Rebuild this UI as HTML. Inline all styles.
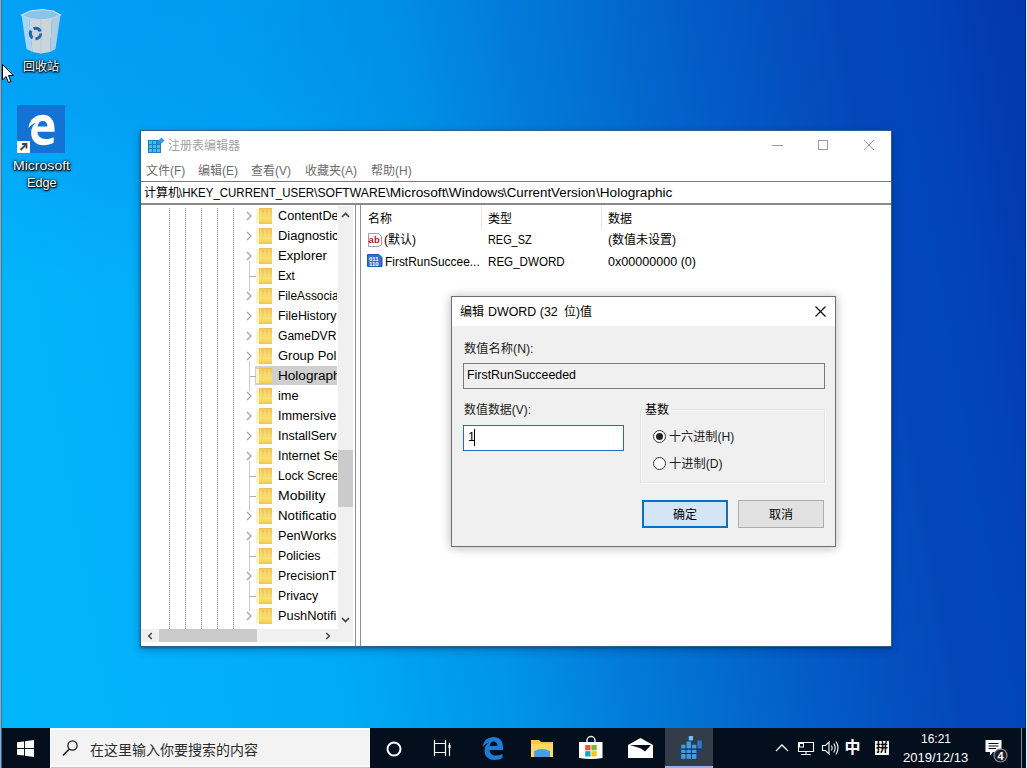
<!DOCTYPE html>
<html lang="zh-CN">
<head>
<meta charset="utf-8">
<title>注册表编辑器</title>
<style>
html,body{margin:0;padding:0}
body{width:1027px;height:768px;overflow:hidden;position:relative;background:#0a6fd6;
  font-family:"Liberation Sans","Noto Sans CJK SC",sans-serif;font-size:12px;color:#000;line-height:1}
div,span{box-sizing:border-box}
.abs,.abs>*{position:absolute}
#wall{left:0;top:0;width:1027px;height:728px;
  background:
    radial-gradient(ellipse 520px 300px at 120px -10px,rgba(0,120,235,.34) 0%,rgba(0,120,235,.26) 40%,rgba(0,120,235,0) 100%),
    linear-gradient(80deg,#02b6fb 0%,#02b4fa 9%,#05b0fa 15%,#00aaf5 31%,#0094e6 45%,#037ada 55%,#0276d4 58%,#035ac8 71.5%,#0446bb 84%,#0246bc 88%,#033ab2 97%,#0337af 100%);}
#edgeL{left:0;top:0;width:2px;height:768px;background:linear-gradient(90deg,#90acbe 0,#90acbe 1px,rgba(70,95,115,.6) 1px,rgba(70,95,115,.6) 2px)}
#edgeR{left:1025px;top:0;width:2px;height:768px;background:linear-gradient(90deg,rgba(0,0,40,.3) 0,rgba(0,0,40,.3) 1px,#e4f3fb 1px,#e4f3fb 2px)}

/* ---------- desktop icons ---------- */
.dlabel{color:#fff;font-size:12px;text-align:center;white-space:nowrap;
  text-shadow:0 1px 2px rgba(0,0,0,.95),0 0 3px rgba(0,0,0,.9),1px 1px 1px rgba(0,0,0,.8),0 0 1px rgba(0,0,0,.8)}

/* ---------- regedit window ---------- */
#win{left:140px;top:130px;width:752px;height:517px;background:#fff;border:1px solid #2c628f;overflow:hidden;
  box-shadow:0 1px 2px rgba(0,20,70,.35),0 3px 8px rgba(0,20,70,.3)}
#wc{left:-1px;top:0;width:752px;height:516px}
#win .title{left:28px;top:7px;font-size:12px;color:#a2a2a2;white-space:nowrap;line-height:16px}
#win .menu{top:32px;font-size:12px;color:#6c6c6c;white-space:nowrap;line-height:16px}
#win .hr1{left:0;top:50px;width:752px;height:1px;background:#7a7a7a}
#win .addr{left:4px;top:54px;font-size:12px;white-space:nowrap;line-height:16px;color:#000}
#win .addr span{position:absolute;top:0;font-size:12.4px}
#win .addr #a1,#win .addr #a2{font-size:12px}
#win .addr #a0{font-size:12px;left:0}
#win .hr2{left:0;top:72px;width:752px;height:2px;background:#8a8a8a}

/* ---------- taskbar ---------- */
#task{left:2px;top:728px;width:1024px;height:40px;background:#040f1e}
#search{left:48px;top:0;width:320px;height:40px;background:#f3f3f3;box-shadow:inset 0 2px 0 #fdfdfd,inset 1px 0 0 #fafafa,inset 0 -1px 0 #c4c4c4,inset 0 -3px 0 #f9f9f9}

/* tree */
#tree{left:1px;top:75px;width:196px;height:423px;overflow:hidden;background:#fff}
#tree .vl{top:2px;width:1px;height:421px;background:repeating-linear-gradient(180deg,#9c9c9c 0,#9c9c9c 1px,#cfcfcf 1px,#cfcfcf 2px)}
#tree .row{left:0;width:197px;height:20px}
#tree .row .chev{left:104px;top:5px;width:8px;height:10px}
#tree .row .dot{left:109px;top:10px;width:7px;height:1px;background:#b0b0b0}
#tree .row .vdot{left:108px;top:-5px;width:1px;height:30px;background:#c9c9c9}
#tree .row .fold{left:115px;top:2px;width:16px;height:16px}
#tree .row .lbl{left:137px;top:2px;font-size:12.5px;line-height:16px;white-space:nowrap;color:#000}
#tree .sel .bg{left:114px;top:0;width:90px;height:19px;background:#cfcfcf}
.fold i{position:absolute;display:block}
.fold .h{left:0;top:1px;width:3px;height:14px;background:#fdf4c4}
.fold .b{left:3px;top:0;width:13px;height:16px;background:linear-gradient(180deg,#eec24c 0%,#f3cd58 30%,#f9e070 62%,#f6d65e 82%,#eec44c 100%)}
.fold .s{left:4px;top:1px;width:11px;height:7px;background:repeating-linear-gradient(90deg,rgba(255,255,255,.16) 0,rgba(255,255,255,.16) 2px,rgba(255,255,255,0) 2px,rgba(255,255,255,0) 4px)}
/* scrollbars */
#vsb{left:198px;top:75px;width:15px;height:423px;background:#f0f0f0}
#vsb .th{left:0;top:244px;width:15px;height:57px;background:#cbcbcb}
#hsb{left:1px;top:498px;width:197px;height:13px;background:#f0f0f0}
#hsb .th{left:18px;top:0;width:98px;height:13px;background:#cbcbcb}
#corner{left:198px;top:498px;width:15px;height:13px;background:#f0f0f0}
#split1{left:215px;top:74px;width:1px;height:442px;background:#8f8f8f}
#split2{left:220px;top:74px;width:1px;height:442px;background:#8f8f8f}
/* list */
#list{left:221px;top:75px;width:531px;height:441px;background:#fff;overflow:hidden}
#list .h{top:5px;font-size:12px;line-height:16px;white-space:nowrap}
#list .cs{top:0;width:1px;height:24px;background:#e5e5e5}
#list .c{font-size:12.6px;line-height:16px;white-space:nowrap}
#list .ic{width:16px;height:16px}
/* dialog */
#dlg{left:451px;top:296px;width:385px;height:251px;background:#f0f0f0;border:1px solid #6f6f6f;
  box-shadow:0 0 9px 1px rgba(0,0,0,.15),0 2px 10px rgba(0,0,0,.12)}
#dlg .tb{left:0;top:0;width:383px;height:29px;background:#fff}
#dlg .tt{left:9px;top:7px;font-size:12px;line-height:16px;white-space:nowrap}
#dlg .lab{font-size:12px;line-height:16px;white-space:nowrap;color:#1c1c1c}
#dlg .f1{left:11px;top:66px;width:362px;height:26px;border:1px solid #7a7a7a;background:#f0f0f0}
#dlg .f1 span{left:3px;top:3px;font-size:12.6px;line-height:16px;white-space:nowrap}
#dlg .f2{left:11px;top:128px;width:161px;height:26px;border:1px solid #1672c8;background:#fff}
#dlg .f2 span{left:4px;top:3px;font-size:12.6px;line-height:16px}
#dlg .f2 i{position:absolute;left:10px;top:3px;width:1px;height:17px;background:#000}
#dlg .grp{left:188px;top:112px;width:185px;height:74px;border:1px solid #e4e4e4;box-shadow:inset 1px 1px 0 #f8f8f8,1px 1px 0 #f8f8f8}
#dlg .grpl{left:191px;top:105px;background:#f0f0f0;padding:0 2px;font-size:12px;line-height:16px}
#dlg .rad{width:13px;height:13px;border-radius:50%;border:1px solid #333;background:#fff}
#dlg .rad.on::after{content:"";position:absolute;left:2px;top:2px;width:7px;height:7px;border-radius:50%;background:#222}
#dlg .btn{top:203px;width:86px;height:28px;font-size:12px;line-height:16px;text-align:center;background:#e1e1e1;border:1px solid #adadad}
#dlg .btn span{left:0;right:0;top:6px}
#dlg .btn.def{border:2px solid #0f6fbf;background:#d4e6f5}
#dlg .btn.def span{top:5px}
/* taskbar bits */
#task .stxt{left:40px;top:14px;font-size:14px;line-height:16px;color:#2b2b2b;white-space:nowrap}
#task svg{position:absolute;overflow:visible}
#task .act{left:663px;top:0;width:48px;height:40px;background:#333c49}
#task .act i{position:absolute;left:0;bottom:0;width:48px;height:2px;background:#8fb6ea}
#task .clk{color:#fff;font-size:12px;line-height:14px;white-space:nowrap}
#task .ime{color:#fff;font-size:16px;line-height:16px;font-weight:bold}
#task .sd{left:1019px;top:0;width:1px;height:40px;background:#7d8590}
/*FIT*/
#a1{transform:scaleX(0.9556);transform-origin:0 50%;left:35.00px!important}
#a2{transform:scaleX(1.0128);transform-origin:0 50%;left:170.00px!important}
#a3{transform:scaleX(1.1079);transform-origin:0 50%;left:241.50px!important}
#a4{transform:scaleX(1.0983);transform-origin:0 50%;left:300.50px!important}
#a5{transform:scaleX(1.0744);transform-origin:0 50%;left:359.00px!important}
#a6{transform:scaleX(1.0980);transform-origin:0 50%;left:451.50px!important}
#t0{transform:scaleX(1.0140);transform-origin:0 50%;left:137.40px!important}
#t1{transform:scaleX(1.0381);transform-origin:0 50%;left:137.40px!important}
#t2{transform:scaleX(1.0527);transform-origin:0 50%;left:137.40px!important}
#t3{transform:scaleX(0.9329);transform-origin:0 50%;left:137.40px!important}
#t4{transform:scaleX(0.9480);transform-origin:0 50%;left:137.40px!important}
#t5{transform:scaleX(0.9890);transform-origin:0 50%;left:137.40px!important}
#t6{transform:scaleX(0.9663);transform-origin:0 50%;left:137.40px!important}
#t7{transform:scaleX(1.0376);transform-origin:0 50%;left:137.40px!important}
#t8{transform:scaleX(1.0852);transform-origin:0 50%;left:137.40px!important}
#t9{transform:scaleX(1.0220);transform-origin:0 50%;left:137.40px!important}
#t10{transform:scaleX(1.0129);transform-origin:0 50%;left:137.40px!important}
#t11{transform:scaleX(1.0007);transform-origin:0 50%;left:137.40px!important}
#t12{transform:scaleX(0.9909);transform-origin:0 50%;left:137.40px!important}
#t13{transform:scaleX(0.9691);transform-origin:0 50%;left:137.40px!important}
#t14{transform:scaleX(1.1209);transform-origin:0 50%;left:137.40px!important}
#t15{transform:scaleX(1.0639);transform-origin:0 50%;left:137.40px!important}
#t16{transform:scaleX(1.0168);transform-origin:0 50%;left:137.40px!important}
#t17{transform:scaleX(0.9866);transform-origin:0 50%;left:137.40px!important}
#t18{transform:scaleX(0.9890);transform-origin:0 50%;left:137.40px!important}
#t19{transform:scaleX(0.9784);transform-origin:0 50%;left:137.40px!important}
#t20{transform:scaleX(1.0248);transform-origin:0 50%;left:137.40px!important}
#l1{transform:scaleX(0.9466);transform-origin:0 50%;left:23.50px!important}
#l2{transform:scaleX(0.8652);transform-origin:0 50%;left:126.50px!important}
#l3{transform:scaleX(0.9217);transform-origin:0 50%;left:126.50px!important}
#l4{transform:scaleX(0.9973);transform-origin:0 50%;left:247.00px!important}
#d1{transform:scaleX(0.9942);transform-origin:0 50%;left:36.25px!important}
#d2{transform:scaleX(0.9854);transform-origin:0 50%;left:3.00px!important}
#c1{transform:scaleX(0.9990);transform-origin:0 50%;left:919.00px!important}
#c2{transform:scaleX(1.0855);transform-origin:0 50%;left:901.30px!important}
#k1{transform:scaleX(1.1242);transform-origin:0 50%;left:13.00px!important}
#k2{transform:scaleX(1.0170);transform-origin:0 50%;left:26.80px!important}
#b1{transform:scaleX(1.0221);transform-origin:0 50%;left:11.50px!important}
#b2{transform:scaleX(0.9949);transform-origin:0 50%;left:11.50px!important}
#b4{transform:scaleX(1.0082);transform-origin:0 50%;left:216.80px!important}
#b5{transform:scaleX(1.0195);transform-origin:0 50%;left:216.80px!important}
/*ENDFIT*/
</style>
</head>
<body>
<div id="wall" class="abs"></div>

<div id="desk" class="abs" style="position:absolute;left:0;top:0;width:140px;height:200px">
  <svg style="left:20px;top:8px" width="42" height="46" viewBox="0 0 42 46">
    <path d="M1.500 7 L10 3 L22 1.500 L33 3 L40.500 7 L32 10.500 L21 12 L9 10.500 Z" fill="#8cc3e8" stroke="#c4e4f8" stroke-width="1.200"/>
    <path d="M1.500 7 L9 10.500 L12.500 44 L6.500 41 Z" fill="#a6d6f5"/>
    <path d="M9 10.500 L21 12 L32 10.500 L30 44 L21 45.500 L12.500 44 Z" fill="#ccd6da"/>
    <path d="M32 10.500 L40.500 7 L35.500 41 L30 44 Z" fill="#aecde4"/>
    <path d="M21 12 L21 45.500" stroke="#b4c4cc" stroke-width="0.800"/>
    <circle cx="15.500" cy="25.500" r="5.200" fill="none" stroke="#1f66b2" stroke-width="3" stroke-dasharray="8 2.900"/>
  </svg>
  <div class="dlabel" style="left:11px;top:59px;width:60px;line-height:16px">回收站</div>
  <div style="left:17px;top:105px;width:48px;height:48px;background:#1273d4"></div>
  <svg style="left:17px;top:105px" width="48" height="48" viewBox="0 0 48 48">
    <g transform="translate(24.500,25) scale(0.900) translate(-24.500,-25)">
    <path d="M10 23 C11 13 18 8 26 8 C35 8 39 15 39 24 L39 27 L20 27 C20 32 24 35 29 35 C33 35 36 34 38 33 L38 39 C35 41 31 42 27 42 C18 42 13 36 13 28 C13 23 15 19 19 17 C15 18 12 20 10 23 Z M20 21 L31 21 C31 17 29 15 26 15 C23 15 21 17 20 21 Z" fill="#fff"/>
    </g>
    <rect x="0" y="36" width="13" height="12" fill="#fff"/>
    <path d="M3.500 45 L9 39.500 M5 39 H9.500 V43.500" stroke="#3a4a5c" stroke-width="1.800" fill="none"/>
  </svg>
  <div class="dlabel" id="k1" style="top:158px;line-height:17px;font-size:12.5px">Microsoft</div><div class="dlabel" id="k2" style="top:175px;line-height:17px;font-size:12.5px">Edge</div>
  <svg style="left:2px;top:64px" width="14" height="21" viewBox="0 0 14 21">
    <path d="M0.500 0.500 L0.500 16 L4 12.500 L6.500 18.500 L9 17.500 L6.500 11.500 L11.500 11.500 Z" fill="#fff" stroke="#000" stroke-width="1"/>
  </svg>
</div>

<!--WINDOW-->
<div id="win" class="abs"><div id="wc" class="abs">
  <svg style="left:8px;top:6px" width="17" height="17" viewBox="0 0 17 17">
    <rect x="0" y="3" width="13" height="13" fill="#1b7fc0"/>
    <g fill="#45bdf0"><rect x="1" y="4" width="3" height="3"/><rect x="5" y="4" width="3" height="3"/><rect x="9" y="4" width="3" height="3" fill="#2a96d6"/>
    <rect x="1" y="8" width="3" height="3"/><rect x="5" y="8" width="3" height="3"/><rect x="9" y="8" width="3" height="3"/>
    <rect x="1" y="12" width="3" height="3"/><rect x="5" y="12" width="3" height="3"/><rect x="9" y="12" width="3" height="3"/></g>
    <path d="M13.500 0.500 L16.500 3.500 L13.500 6.500 L10.500 3.500 Z" fill="#3a9be0"/>
  </svg>
  <div class="title">注册表编辑器</div>
  <svg style="left:632px;top:14px" width="11" height="1" viewBox="0 0 11 1"><rect width="11" height="1" fill="#9a9a9a"/></svg>
  <svg style="left:678px;top:9px" width="10" height="10" viewBox="0 0 10 10"><rect x="0.500" y="0.500" width="9" height="9" fill="none" stroke="#9a9a9a" stroke-width="1"/></svg>
  <svg style="left:724px;top:9px" width="10" height="10" viewBox="0 0 10 10"><path d="M0 0 L10 10 M10 0 L0 10" stroke="#9a9a9a" stroke-width="1" fill="none"/></svg>
  <div class="menu" style="left:6px">文件(F)</div>
  <div class="menu" style="left:58px">编辑(E)</div>
  <div class="menu" style="left:111px">查看(V)</div>
  <div class="menu" style="left:165px">收藏夹(A)</div>
  <div class="menu" style="left:231px">帮助(H)</div>
  <div class="hr1"></div>
  <div class="addr"><span id="a0">计算机</span><span id="a1">\HKEY_CURRENT_USER</span><span id="a2">\SOFTWARE</span><span id="a3">\Microsoft</span><span id="a4">\Windows</span><span id="a5">\CurrentVersion</span><span id="a6">\Holographic</span></div>
  <div class="hr2"></div>
<div id="tree" class="abs">
  <div class="vl" style="left:28px"></div>
  <div class="vl" style="left:44px"></div>
  <div class="vl" style="left:60px"></div>
  <div class="vl" style="left:76px"></div>
  <div class="vl" style="left:92px"></div>
  <div class="row abs" style="top:0px"><svg class="chev" viewBox="0 0 8 10" width="8" height="10" style="background:#fff"><path d="M2 1 L6 5 L2 9" fill="none" stroke="#a3a3a3" stroke-width="1.3"/></svg><span class="fold"><i class="h"></i><i class="b"></i><i class="s"></i></span><span class="lbl" id="t0">ContentDe</span></div>
  <div class="row abs" style="top:20px"><svg class="chev" viewBox="0 0 8 10" width="8" height="10" style="background:#fff"><path d="M2 1 L6 5 L2 9" fill="none" stroke="#a3a3a3" stroke-width="1.3"/></svg><span class="fold"><i class="h"></i><i class="b"></i><i class="s"></i></span><span class="lbl" id="t1">Diagnostic</span></div>
  <div class="row abs" style="top:40px"><svg class="chev" viewBox="0 0 8 10" width="8" height="10" style="background:#fff"><path d="M2 1 L6 5 L2 9" fill="none" stroke="#a3a3a3" stroke-width="1.3"/></svg><span class="fold"><i class="h"></i><i class="b"></i><i class="s"></i></span><span class="lbl" id="t2">Explorer</span></div>
  <div class="row abs" style="top:60px"><span class="vdot"></span><span class="dot"></span><span class="fold"><i class="h"></i><i class="b"></i><i class="s"></i></span><span class="lbl" id="t3">Ext</span></div>
  <div class="row abs" style="top:80px"><svg class="chev" viewBox="0 0 8 10" width="8" height="10" style="background:#fff"><path d="M2 1 L6 5 L2 9" fill="none" stroke="#a3a3a3" stroke-width="1.3"/></svg><span class="fold"><i class="h"></i><i class="b"></i><i class="s"></i></span><span class="lbl" id="t4">FileAssocia</span></div>
  <div class="row abs" style="top:100px"><svg class="chev" viewBox="0 0 8 10" width="8" height="10" style="background:#fff"><path d="M2 1 L6 5 L2 9" fill="none" stroke="#a3a3a3" stroke-width="1.3"/></svg><span class="fold"><i class="h"></i><i class="b"></i><i class="s"></i></span><span class="lbl" id="t5">FileHistory</span></div>
  <div class="row abs" style="top:120px"><svg class="chev" viewBox="0 0 8 10" width="8" height="10" style="background:#fff"><path d="M2 1 L6 5 L2 9" fill="none" stroke="#a3a3a3" stroke-width="1.3"/></svg><span class="fold"><i class="h"></i><i class="b"></i><i class="s"></i></span><span class="lbl" id="t6">GameDVR</span></div>
  <div class="row abs" style="top:140px"><svg class="chev" viewBox="0 0 8 10" width="8" height="10" style="background:#fff"><path d="M2 1 L6 5 L2 9" fill="none" stroke="#a3a3a3" stroke-width="1.3"/></svg><span class="fold"><i class="h"></i><i class="b"></i><i class="s"></i></span><span class="lbl" id="t7">Group Pol</span></div>
  <div class="row abs sel" style="top:160px"><span class="bg"></span><span class="vdot"></span><span class="dot"></span><span class="fold"><i class="h"></i><i class="b"></i><i class="s"></i></span><span class="lbl" id="t8">Holograph</span></div>
  <div class="row abs" style="top:180px"><svg class="chev" viewBox="0 0 8 10" width="8" height="10" style="background:#fff"><path d="M2 1 L6 5 L2 9" fill="none" stroke="#a3a3a3" stroke-width="1.3"/></svg><span class="fold"><i class="h"></i><i class="b"></i><i class="s"></i></span><span class="lbl" id="t9">ime</span></div>
  <div class="row abs" style="top:200px"><svg class="chev" viewBox="0 0 8 10" width="8" height="10" style="background:#fff"><path d="M2 1 L6 5 L2 9" fill="none" stroke="#a3a3a3" stroke-width="1.3"/></svg><span class="fold"><i class="h"></i><i class="b"></i><i class="s"></i></span><span class="lbl" id="t10">Immersive</span></div>
  <div class="row abs" style="top:220px"><svg class="chev" viewBox="0 0 8 10" width="8" height="10" style="background:#fff"><path d="M2 1 L6 5 L2 9" fill="none" stroke="#a3a3a3" stroke-width="1.3"/></svg><span class="fold"><i class="h"></i><i class="b"></i><i class="s"></i></span><span class="lbl" id="t11">InstallServ</span></div>
  <div class="row abs" style="top:240px"><svg class="chev" viewBox="0 0 8 10" width="8" height="10" style="background:#fff"><path d="M2 1 L6 5 L2 9" fill="none" stroke="#a3a3a3" stroke-width="1.3"/></svg><span class="fold"><i class="h"></i><i class="b"></i><i class="s"></i></span><span class="lbl" id="t12">Internet Se</span></div>
  <div class="row abs" style="top:260px"><span class="vdot"></span><span class="dot"></span><span class="fold"><i class="h"></i><i class="b"></i><i class="s"></i></span><span class="lbl" id="t13">Lock Scree</span></div>
  <div class="row abs" style="top:280px"><span class="vdot"></span><span class="dot"></span><span class="fold"><i class="h"></i><i class="b"></i><i class="s"></i></span><span class="lbl" id="t14">Mobility</span></div>
  <div class="row abs" style="top:300px"><svg class="chev" viewBox="0 0 8 10" width="8" height="10" style="background:#fff"><path d="M2 1 L6 5 L2 9" fill="none" stroke="#a3a3a3" stroke-width="1.3"/></svg><span class="fold"><i class="h"></i><i class="b"></i><i class="s"></i></span><span class="lbl" id="t15">Notificatio</span></div>
  <div class="row abs" style="top:320px"><svg class="chev" viewBox="0 0 8 10" width="8" height="10" style="background:#fff"><path d="M2 1 L6 5 L2 9" fill="none" stroke="#a3a3a3" stroke-width="1.3"/></svg><span class="fold"><i class="h"></i><i class="b"></i><i class="s"></i></span><span class="lbl" id="t16">PenWorks</span></div>
  <div class="row abs" style="top:340px"><span class="vdot"></span><span class="dot"></span><span class="fold"><i class="h"></i><i class="b"></i><i class="s"></i></span><span class="lbl" id="t17">Policies</span></div>
  <div class="row abs" style="top:360px"><svg class="chev" viewBox="0 0 8 10" width="8" height="10" style="background:#fff"><path d="M2 1 L6 5 L2 9" fill="none" stroke="#a3a3a3" stroke-width="1.3"/></svg><span class="fold"><i class="h"></i><i class="b"></i><i class="s"></i></span><span class="lbl" id="t18">PrecisionT</span></div>
  <div class="row abs" style="top:380px"><span class="vdot"></span><span class="dot"></span><span class="fold"><i class="h"></i><i class="b"></i><i class="s"></i></span><span class="lbl" id="t19">Privacy</span></div>
  <div class="row abs" style="top:400px"><svg class="chev" viewBox="0 0 8 10" width="8" height="10" style="background:#fff"><path d="M2 1 L6 5 L2 9" fill="none" stroke="#a3a3a3" stroke-width="1.3"/></svg><span class="fold"><i class="h"></i><i class="b"></i><i class="s"></i></span><span class="lbl" id="t20">PushNotifi</span></div>
</div>
<div id="vsb" class="abs">
  <svg style="left:3px;top:6px" width="9" height="6" viewBox="0 0 9 6"><path d="M1 5 L4.5 1.5 L8 5" fill="none" stroke="#404040" stroke-width="1.6"/></svg>
  <div class="th"></div>
  <svg style="left:3px;top:411px" width="9" height="6" viewBox="0 0 9 6"><path d="M1 1 L4.5 4.5 L8 1" fill="none" stroke="#404040" stroke-width="1.6"/></svg>
</div>
<div id="hsb" class="abs">
  <svg style="left:6px;top:3px" width="6" height="8" viewBox="0 0 6 9"><path d="M5 1 L1.5 4.5 L5 8" fill="none" stroke="#404040" stroke-width="1.6"/></svg>
  <div class="th"></div>
  <svg style="left:184px;top:3px" width="6" height="8" viewBox="0 0 6 9"><path d="M1 1 L4.5 4.5 L1 8" fill="none" stroke="#404040" stroke-width="1.6"/></svg>
</div>
<div id="corner" class="abs"></div>
<div id="split1"></div><div id="split2"></div>
<div id="list" class="abs">
  <div class="cs" style="left:120px"></div><div class="cs" style="left:240px"></div>
  <div class="h" style="left:7px">名称</div>
  <div class="h" style="left:127px">类型</div>
  <div class="h" style="left:247px">数据</div>
  <svg class="ic" style="left:6px;top:26px" viewBox="0 0 16 16" width="16" height="16">
    <path d="M1.5 1.5h10l3 3v8.5l-3.5 1.5h-9.500z" fill="#fff" stroke="#9aa0a6" stroke-width="1"/>
    <text x="1.600" y="10.800" font-family="Liberation Sans, sans-serif" font-size="9.500" font-weight="bold" fill="#b3201f">ab</text>
  </svg>
  <div class="c" style="left:23px;top:26px"><span style="font-size:12px">(默认)</span></div>
  <div class="c" id="l2" style="left:127px;top:26px">REG_SZ</div>
  <div class="c" style="left:247px;top:26px"><span style="font-size:12px">(数值未设置)</span></div>
  <svg class="ic" style="left:5.500px;top:47px" viewBox="0 0 16 16" width="16" height="16">
    <path d="M0.500 1.5h11.500l3 3v9h-14.500z" fill="#2f6fd0" stroke="#1f56b0" stroke-width="1"/>
    <text x="2" y="7.500" font-family="Liberation Sans, sans-serif" font-size="6" font-weight="bold" fill="#fff">011</text>
    <text x="2" y="13" font-family="Liberation Sans, sans-serif" font-size="6" font-weight="bold" fill="#fff">110</text>
  </svg>
  <div class="c" id="l1" style="left:23px;top:48px">FirstRunSuccee...</div>
  <div class="c" id="l3" style="left:127px;top:48px">REG_DWORD</div>
  <div class="c" id="l4" style="left:247px;top:48px">0x00000000 (0)</div>
</div>
</div></div>

<div id="dlg" class="abs">
  <div class="tb"></div>
  <div class="tt" style="left:8px">编辑</div><div class="tt" id="d1" style="font-size:12.5px">DWORD (32</div><div class="tt" style="left:112px">位)值</div>
  <svg style="left:363px;top:9px" width="11" height="11" viewBox="0 0 11 11"><path d="M0.500 0.500 L10.500 10.500 M10.500 0.500 L0.500 10.500" stroke="#000" stroke-width="1.1" fill="none"/></svg>
  <div class="lab" id="b1" style="left:11px;top:44px">数值名称(N):</div>
  <div class="f1 abs"><span id="d2">FirstRunSucceeded</span></div>
  <div class="lab" id="b2" style="left:11px;top:105px">数值数据(V):</div>
  <div class="f2 abs"><span>1</span><i></i></div>
  <div class="grp"></div>
  <div class="grpl" id="b3">基数</div>
  <div class="rad on" style="left:201px;top:133px"></div>
  <div class="lab" id="b4" style="left:217px;top:132px">十六进制(H)</div>
  <div class="rad" style="left:201px;top:160px"></div>
  <div class="lab" id="b5" style="left:217px;top:159px">十进制(D)</div>
  <div class="btn def abs" style="left:190px"><span>确定</span></div>
  <div class="btn abs" style="left:286px"><span>取消</span></div>
</div>

<!--TASKBAR-->
<div id="task" class="abs">
  <svg style="left:15px;top:12px" width="17" height="17" viewBox="0 0 18 18">
    <path d="M0 2.500 L7.500 1.500 V8.500 H0 Z M8.500 1.300 L18 0 V8.500 H8.500 Z M0 9.500 H7.500 V16.500 L0 15.500 Z M8.500 9.500 H18 V18 L8.500 16.700 Z" fill="#fff"/>
  </svg>
  <div id="search" class="abs">
    <svg style="left:12px;top:11px" width="16" height="18" viewBox="0 0 16 18">
      <circle cx="10.500" cy="6.500" r="4.600" fill="none" stroke="#1a1a1a" stroke-width="1.300"/>
      <path d="M7.300 10 L1 16.500" stroke="#1a1a1a" stroke-width="1.500" fill="none"/>
    </svg>
    <div class="stxt">在这里输入你要搜索的内容</div>
  </div>
  <svg style="left:384px;top:13px" width="16" height="16" viewBox="0 0 16 16">
    <circle cx="8" cy="8" r="6.500" fill="none" stroke="#fff" stroke-width="2"/>
  </svg>
  <svg style="left:431px;top:12px" width="18" height="16" viewBox="0 0 18 16">
    <path d="M1.500 0 V16 M12.500 0 V16 M1.500 3.500 H12.500 M1.500 12.500 H12.500 M16.500 3 V16" stroke="#fff" stroke-width="1.200" fill="none"/>
    <rect x="15.500" y="5" width="2" height="3" fill="#fff"/>
  </svg>
  <svg style="left:479px;top:8px" width="24" height="24" viewBox="0 0 48 48">
    <path d="M3 22 C5 9 14 2 25 2 C38 2 44 11 44 23 L44 28 L17 28 C17 35 23 39 30 39 C35 39 39 38 43 36 L43 44 C39 46 34 48 27 48 C14 48 7 40 7 29 C7 22 10 17 16 14 C10 15 6 18 3 22 Z M17 20 L33 20 C33 14 30 11 25 11 C21 11 18 14 17 20 Z" fill="#1c7cd6"/>
  </svg>
  <svg style="left:529px;top:10px" width="22" height="20" viewBox="0 0 22 20">
    <path d="M0 2 H8 L10 4 H22 V19 H0 Z" fill="#f5c84a"/>
    <path d="M0 6 H22 V19 H0 Z" fill="#fbd965"/>
    <path d="M3 19 V13 Q11 9 19 13 V19 Z" fill="#4a9de0"/>
  </svg>
  <svg style="left:577px;top:6px" width="24" height="25" viewBox="0 0 24 25">
    <path d="M8 9 V6.500 a4 4 0 0 1 8 0 V9" fill="none" stroke="#e4e6f6" stroke-width="1.500"/>
    <path d="M0 8 H23.500 V24 Q12 26 0 24 Z" fill="#fff"/>
    <rect x="6.200" y="11" width="5.300" height="5.300" fill="#f0553a"/><rect x="12.400" y="11" width="5.300" height="5.300" fill="#7fba1c"/>
    <rect x="6.200" y="17.200" width="5.300" height="5.300" fill="#10a6c8"/><rect x="12.400" y="17.200" width="5.300" height="5.300" fill="#fcc21c"/>
  </svg>
  <svg style="left:626px;top:10px" width="25" height="20" viewBox="0 0 25 20">
    <path d="M0 7 L12.500 0 L25 7 V20 H0 Z" fill="#fff"/>
    <path d="M2 7 H23 L17 13.500 L13 10.500 Z" fill="#040f1e"/>
  </svg>
  <div class="act"><i></i></div>
  <svg style="left:677px;top:7px" width="26" height="26" viewBox="0 0 24 24">
    <g fill="#3aa0ee">
      <rect x="2" y="9" width="4" height="13"/><rect x="7" y="6" width="4" height="16"/><rect x="12" y="9" width="4" height="13"/>
      <rect x="17" y="5" width="4" height="9" fill="#2a78d0"/><rect x="9" y="1" width="4" height="4" fill="#6ec0ff"/>
    </g>
    <path d="M2 13 H21 M2 17 H16" stroke="#14283c" stroke-width="1"/>
  </svg>
  <svg style="left:773px;top:16px" width="14" height="8" viewBox="0 0 14 8"><path d="M1 7 L7 1 L13 7" fill="none" stroke="#fff" stroke-width="1.300"/></svg>
  <svg style="left:796px;top:14px" width="17" height="14" viewBox="0 0 17 14">
    <path d="M0.500 0.500 H15.500 V9.500 H0.500 Z M8 9.500 V12.500 M3 12.500 H13" fill="none" stroke="#fff" stroke-width="1.100"/>
    <rect x="1.500" y="1.500" width="4" height="3.500" fill="none" stroke="#fff" stroke-width="1"/>
  </svg>
  <svg style="left:820px;top:13px" width="18" height="14" viewBox="0 0 18 14">
    <path d="M0.500 4.500 H3.500 L7 1 V13 L3.500 9.500 H0.500 Z" fill="none" stroke="#fff" stroke-width="1.100"/>
    <path d="M9.500 4.500 Q11 7 9.500 9.500 M11.800 2.500 Q14.500 7 11.800 11.500 M14 0.500 Q18 7 14 13.500" fill="none" stroke="#fff" stroke-width="1.100"/>
  </svg>
  <div class="ime" style="left:842.500px;top:12px">中</div>
  <div style="left:873px;top:13px;width:14px;height:14px;background:#fff;color:#000;font-size:12px;line-height:14px;text-align:center;font-weight:bold">拼</div>
  <div class="clk" id="c1" style="top:4px">16:21</div>
  <div class="clk" id="c2" style="top:23px">2019/12/13</div>
  <svg style="left:983px;top:11px" width="24" height="24" viewBox="0 0 24 24">
    <path d="M0.500 1 H16.500 V13 H8 L5 16.500 V13 H0.500 Z" fill="#fff"/>
    <path d="M3.500 4.500 H13.500 M3.500 7 H13.500 M3.500 9.500 H11" stroke="#040f1e" stroke-width="1"/>
    <circle cx="15.500" cy="16.500" r="6.500" fill="#1c2026" stroke="#8a8f96" stroke-width="1.200"/>
    <text x="15.500" y="20.500" text-anchor="middle" font-family="Liberation Sans, sans-serif" font-size="11" font-weight="bold" fill="#fff">4</text>
  </svg>
  <div class="sd"></div>
</div>

<div id="edgeL" class="abs" style="position:absolute"></div>
<div id="edgeR" class="abs" style="position:absolute"></div>
</body>
</html>
